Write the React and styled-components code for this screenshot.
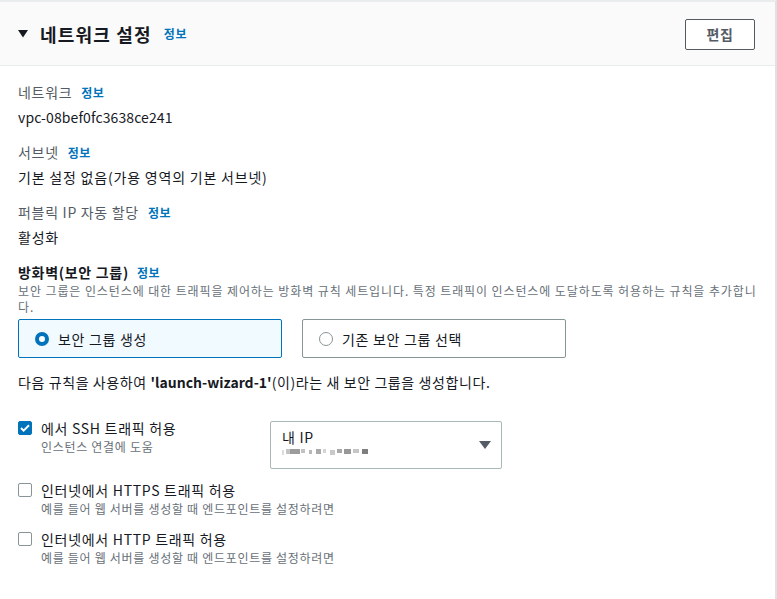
import React from 'react';
import styled, { createGlobalStyle } from 'styled-components';

const GlobalStyle = createGlobalStyle`
  body {
    margin: 0;
    background: #ffffff;
    font-family: "Noto Sans CJK KR", "Noto Sans", sans-serif;
    color: #16191f;
    letter-spacing: 0.7px;
  }
`;

const fields = [
  { label: '네트워크', value: 'vpc-08bef0fc3638ce241', latin: true },
  { label: '서브넷', value: '기본 설정 없음(가용 영역의 기본 서브넷)' },
  { label: '퍼블릭 IP 자동 할당', value: '활성화' },
];

const rules = [
  { title: '인터넷에서 HTTPS 트래픽 허용', sub: '예를 들어 웹 서버를 생성할 때 엔드포인트를 설정하려면' },
  { title: '인터넷에서 HTTP 트래픽 허용', sub: '예를 들어 웹 서버를 생성할 때 엔드포인트를 설정하려면' },
];

const mask = [
  [0, 2, '#dcdcdc'], [4, 4, '#c4c4c4'], [8, 10, '#9c9c9c'], [19, 4, '#c2c2c2'],
  [27, 3, '#b8b8b8'], [34, 5, '#aaaaaa'], [41, 3, '#d4d4d4'], [48, 5, '#c9c9c9'],
  [55, 5, '#a8a8a8'], [62, 7, '#989898'], [71, 6, '#c6c6c6'], [80, 6, '#7e7e7e'],
];

const App = () => (
  <>
    <GlobalStyle />
    <Card>
      <Header>
        <TitleWrap>
          <svg width="10" height="8" viewBox="0 0 10 8">
            <path d="M0 0h10L5 7.5z" fill="#16191f" />
          </svg>
          <Title>네트워크 설정</Title>
          <Info>정보</Info>
        </TitleWrap>
        <EditButton>편집</EditButton>
      </Header>

      <Body>
        {fields.map((f) => (
          <Field key={f.label}>
            <Label>
              {f.label}
              <Info>정보</Info>
            </Label>
            <Value $latin={f.latin}>{f.value}</Value>
          </Field>
        ))}

        <SectionTitle>
          방화벽(보안 그룹)
          <Info>정보</Info>
        </SectionTitle>
        <Description>
          보안 그룹은 인스턴스에 대한 트래픽을 제어하는 방화벽 규칙 세트입니다. 특정 트래픽이 인스턴스에 도달하도록 허용하는 규칙을 추가합니다.
        </Description>

        <Tiles>
          <Tile $selected>
            <Radio $checked />
            보안 그룹 생성
          </Tile>
          <Tile>
            <Radio />
            기존 보안 그룹 선택
          </Tile>
        </Tiles>

        <Note>
          다음 규칙을 사용하여 <b>'launch-wizard-1'</b>(이)라는 새 보안 그룹을 생성합니다.
        </Note>

        <Options>
          <FirstRow>
            <CheckItem>
              <CheckBox $checked>
                <svg width="10" height="8" viewBox="0 0 10 8">
                  <path d="M1 4l2.6 2.6L9 1.2" fill="none" stroke="#fff" strokeWidth="2" />
                </svg>
              </CheckBox>
              <div>
                <CheckTitle>에서 SSH 트래픽 허용</CheckTitle>
                <CheckSub>인스턴스 연결에 도움</CheckSub>
              </div>
            </CheckItem>
            <Select>
              <SelectValue>
                <SelectLabel>내 IP</SelectLabel>
                <svg width="88" height="6" viewBox="0 0 88 6">
                  {mask.map(([x, w, c]) => (
                    <rect key={x} x={x} y={x % 3 === 0 ? 1 : 0} width={w} height={x % 2 ? 4 : 5} fill={c} />
                  ))}
                </svg>
              </SelectValue>
              <svg width="12" height="8" viewBox="0 0 12 8">
                <path d="M0 0h12L6 8z" fill="#545b64" />
              </svg>
            </Select>
          </FirstRow>
          {rules.map((r) => (
            <CheckItem key={r.title}>
              <CheckBox />
              <div>
                <CheckTitle>{r.title}</CheckTitle>
                <CheckSub>{r.sub}</CheckSub>
              </div>
            </CheckItem>
          ))}
        </Options>
      </Body>
    </Card>
  </>
);

export default App;

const Card = styled.section`
  width: 777px;
  min-height: 599px;
  box-sizing: border-box;
  background: #ffffff;
  border-top: 2px solid #eaeded;
  border-right: 2px solid #dfe2e3;
`;

const Header = styled.header`
  height: 63px;
  display: flex;
  align-items: center;
  justify-content: space-between;
  padding: 0 20px 0 18px;
  background: #fafafa;
  border-bottom: 1px solid #eaeded;
`;

const TitleWrap = styled.div`
  display: flex;
  align-items: center;
  gap: 12px;
`;

const Title = styled.h2`
  margin: 0;
  font-size: 18px;
  line-height: 28px;
  font-weight: 700;
  letter-spacing: 1.2px;
  color: #16191f;
`;

const Info = styled.a`
  margin-left: 9px;
  font-size: 12px;
  font-weight: 700;
  letter-spacing: 0.5px;
  color: #0073bb;
  cursor: pointer;

  ${TitleWrap} & {
    margin-left: 0;
  }
`;

const EditButton = styled.button`
  width: 70px;
  height: 31px;
  margin-top: 1px;
  background: #ffffff;
  border: 1px solid #545b64;
  border-radius: 2px;
  font-family: inherit;
  font-size: 14px;
  font-weight: 700;
  letter-spacing: 0.7px;
  color: #545b64;
  cursor: pointer;
`;

const Body = styled.div`
  padding: 16px 18px 0 18px;
`;

const Field = styled.div`
  margin-bottom: 15px;
`;

const Label = styled.div`
  font-size: 14px;
  line-height: 20px;
  color: #545b64;
`;

const Value = styled.div`
  margin-top: 4px;
  font-size: 14px;
  line-height: 20px;
  letter-spacing: ${(p) => (p.$latin ? '0.1px' : '0.8px')};
  color: #16191f;
`;

const SectionTitle = styled.div`
  font-size: 14px;
  line-height: 20px;
  font-weight: 700;

  ${Info} {
    margin-left: 8px;
  }
`;

const Description = styled.p`
  margin: 0;
  max-width: 742px;
  font-size: 12px;
  line-height: 16px;
  letter-spacing: 0.9px;
  color: #687078;
`;

const Tiles = styled.div`
  display: flex;
  gap: 20px;
  margin-top: 4px;
`;

const Tile = styled.label`
  width: 264px;
  height: 39px;
  box-sizing: border-box;
  display: flex;
  align-items: center;
  gap: 9px;
  padding: 0 16px;
  border: 1px solid ${(p) => (p.$selected ? '#0073bb' : '#879596')};
  border-radius: 2px;
  background: ${(p) => (p.$selected ? '#f1faff' : '#ffffff')};
  font-size: 14px;
  color: #16191f;
`;

const Radio = styled.span`
  width: 14px;
  height: 14px;
  box-sizing: border-box;
  border-radius: 50%;
  border: ${(p) => (p.$checked ? '4px solid #0073bb' : '1px solid #879596')};
  background: #ffffff;
  flex-shrink: 0;
`;

const Note = styled.p`
  margin: 14px 0 0;
  font-size: 14px;
  line-height: 20px;
  letter-spacing: 0.6px;

  b {
    font-weight: 700;
    letter-spacing: 0;
  }
`;

const Options = styled.div`
  margin-top: 26px;
  display: flex;
  flex-direction: column;
  gap: 11px;
`;

const FirstRow = styled.div`
  display: grid;
  grid-template-columns: 252px 232px;
  align-items: start;
`;

const CheckItem = styled.label`
  display: flex;
  align-items: flex-start;
  gap: 9px;
`;

const CheckBox = styled.span`
  width: 14px;
  height: 14px;
  margin-top: 3px;
  box-sizing: border-box;
  display: flex;
  align-items: center;
  justify-content: center;
  border-radius: 2px;
  border: 1px solid ${(p) => (p.$checked ? '#0073bb' : '#879596')};
  background: ${(p) => (p.$checked ? '#0073bb' : '#ffffff')};
  flex-shrink: 0;
`;

const CheckTitle = styled.div`
  font-size: 14px;
  line-height: 20px;
  color: #16191f;
`;

const CheckSub = styled.div`
  font-size: 12px;
  line-height: 18px;
  color: #687078;
`;

const Select = styled.div`
  margin-top: 3px;
  height: 48px;
  box-sizing: border-box;
  display: flex;
  align-items: center;
  justify-content: space-between;
  padding: 0 10px 0 11px;
  border: 1px solid #aab7b8;
  border-radius: 2px;
`;

const SelectValue = styled.div`
  align-self: flex-start;
  padding-top: 6px;
  display: flex;
  flex-direction: column;
  gap: 3px;
`;

const SelectLabel = styled.div`
  font-size: 14px;
  line-height: 18px;
  color: #16191f;
`;
